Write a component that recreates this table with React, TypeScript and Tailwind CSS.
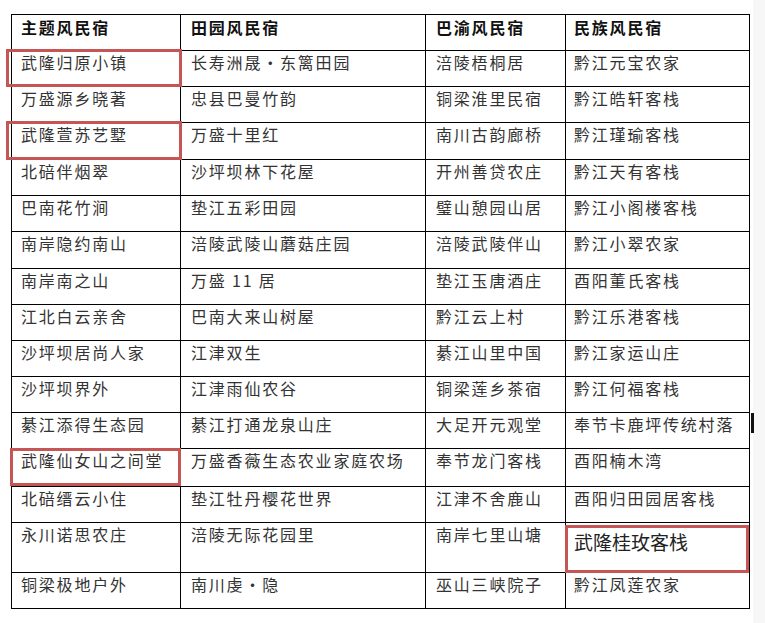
import React from "react";

type Row = { cells: string[]; h: number };

const rows: Row[] = [
  { cells: ["武隆归原小镇", "长寿洲晟・东篱田园", "涪陵梧桐居", "黔江元宝农家"], h: 36 },
  { cells: ["万盛源乡晓著", "忠县巴曼竹韵", "铜梁淮里民宿", "黔江皓轩客栈"], h: 36 },
  { cells: ["武隆萱苏艺墅", "万盛十里红", "南川古韵廊桥", "黔江瑾瑜客栈"], h: 37 },
  { cells: ["北碚伴烟翠", "沙坪坝林下花屋", "开州善贷农庄", "黔江天有客栈"], h: 36 },
  { cells: ["巴南花竹涧", "垫江五彩田园", "璧山憩园山居", "黔江小阁楼客栈"], h: 36 },
  { cells: ["南岸隐约南山", "涪陵武陵山蘑菇庄园", "涪陵武陵伴山", "黔江小翠农家"], h: 37 },
  { cells: ["南岸南之山", "万盛 11 居", "垫江玉唐酒庄", "酉阳董氏客栈"], h: 36 },
  { cells: ["江北白云亲舍", "巴南大来山树屋", "黔江云上村", "黔江乐港客栈"], h: 36 },
  { cells: ["沙坪坝居尚人家", "江津双生", "綦江山里中国", "黔江家运山庄"], h: 36 },
  { cells: ["沙坪坝界外", "江津雨仙农谷", "铜梁莲乡茶宿", "黔江何福客栈"], h: 36 },
  { cells: ["綦江添得生态园", "綦江打通龙泉山庄", "大足开元观堂", "奉节卡鹿坪传统村落"], h: 36 },
  { cells: ["武隆仙女山之间堂", "万盛香薇生态农业家庭农场", "奉节龙门客栈", "酉阳楠木湾"], h: 38 },
  { cells: ["北碚缙云小住", "垫江牡丹樱花世界", "江津不舍鹿山", "酉阳归田园居客栈"], h: 36 },
  { cells: ["永川诺思农庄", "涪陵无际花园里", "南岸七里山塘", "武隆桂玫客栈"], h: 50 },
  { cells: ["铜梁极地户外", "南川虔・隐", "巫山三峡院子", "黔江凤莲农家"], h: 36 },
];

const headers = ["主题风民宿", "田园风民宿", "巴渝风民宿", "民族风民宿"];
const widths = ["w-[169px]", "w-[245px]", "w-[140px]", "w-[184px]"];
const pads = ["pl-[9px]", "pl-[10px]", "pl-[10px]", "pl-[8px]"];

const font = {
  fontFamily: '"Noto Sans CJK SC", "Liberation Sans", sans-serif',
};

export default function App() {
  return (
    <div className="flex min-h-[623px] w-[765px] bg-white" style={font}>
      <div className="w-[753px] bg-white pl-[11px] pt-[14px]">
        <table className="w-[739px] table-fixed border-collapse">
          <colgroup>
            {widths.map((w, i) => (
              <col key={i} className={w} />
            ))}
          </colgroup>
          <thead>
            <tr className="h-[36px]">
              {headers.map((t, i) => (
                <th
                  key={i}
                  className={`border border-black ${pads[i]} pt-[2px] text-left align-top text-[16px] font-bold leading-[20px] tracking-[1.8px] text-[#111]`}
                >
                  {t}
                </th>
              ))}
            </tr>
          </thead>
          <tbody>
            {rows.map((r, ri) => (
              <tr key={ri} style={{ height: r.h }}>
                {r.cells.map((c, ci) => {
                  const big = ri === 13 && ci === 3;
                  return (
                    <td
                      key={ci}
                      className={`relative border border-black ${pads[ci]} align-top whitespace-nowrap ${
                        big
                          ? "pt-[8px] text-[19px] leading-[22px] tracking-[0px] text-[#222]"
                          : "pt-[1px] text-[16px] leading-[20px] tracking-[1.8px] text-[#333]"
                      }`}
                    >
                      {c}
                      {ci === 0 && (ri === 0 || ri === 2) && (
                        <div className="pointer-events-none absolute -top-[2px] -bottom-[1px] -left-[6px] -right-[2px] border-[3px] border-[#c65555]" />
                      )}
                      {ci === 0 && ri === 11 && (
                        <div className="pointer-events-none absolute -top-[1px] bottom-[0px] -left-[2px] -right-[1px] border-[3px] border-[#c65555]" />
                      )}
                      {big && (
                        <div className="pointer-events-none absolute top-[2px] -bottom-[1px] -left-[1px] right-[0px] border-[3px] border-[#c65555]" />
                      )}
                      {ci === 3 && ri === 9 && (
                        <div className="pointer-events-none absolute -bottom-[21px] -right-[5px] h-[20px] w-[3px] bg-[#111]" />
                      )}
                    </td>
                  );
                })}
              </tr>
            ))}
          </tbody>
        </table>
      </div>
      <div className="flex-1 bg-[#f7f7f7]" />
    </div>
  );
}
